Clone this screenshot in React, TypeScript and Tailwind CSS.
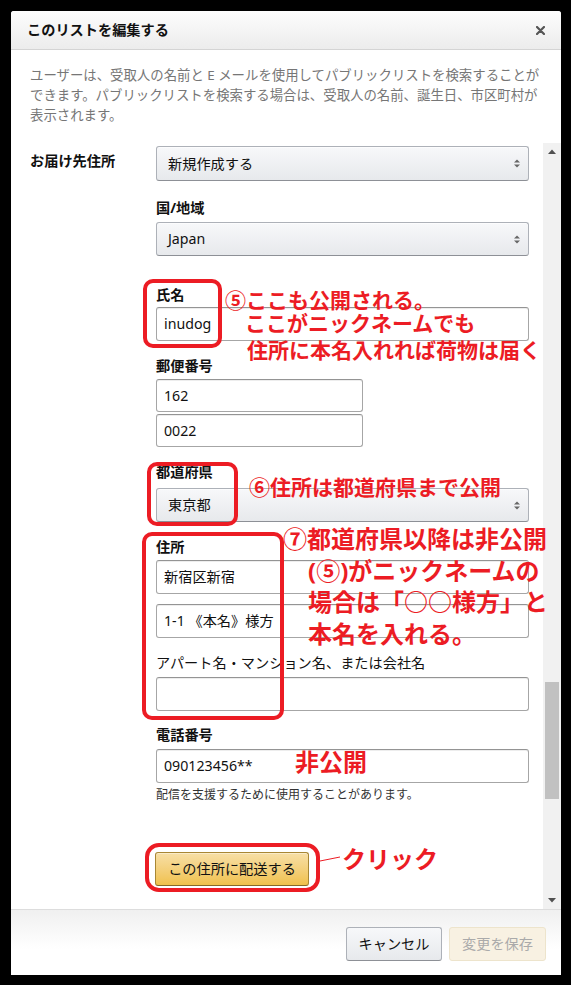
import React from "react";

const Arrows = () => (
  <svg width="6" height="9" viewBox="0 0 6 9" className="shrink-0">
    <path d="M0 3.5 L3 0.5 L6 3.5 Z" fill="#666" />
    <path d="M0 5.5 L3 8.5 L6 5.5 Z" fill="#666" />
  </svg>
);

const Select = ({ value, className = "" }: { value: string; className?: string }) => (
  <div
    className={`flex items-center justify-between rounded-[3px] border border-[#adb1b8] border-b-[#8d9096] bg-gradient-to-b from-[#f7f8fa] to-[#e7e9ec] pl-[11px] pr-[8px] text-[14.2px] text-[#111] shadow-[0_1px_0_rgba(255,255,255,0.6)_inset] ${className}`}
  >
    <span>{value}</span>
    <Arrows />
  </div>
);

const Input = ({ value = "", className = "" }: { value?: string; className?: string }) => (
  <div
    className={`flex items-center rounded-[3px] border border-[#a6a6a6] border-t-[#949494] bg-white pl-[7px] text-[14.2px] text-[#111] shadow-[0_1px_0_rgba(255,255,255,0.5),0_1px_0_rgba(0,0,0,0.07)_inset] ${className}`}
  >
    {value}
  </div>
);

const Label = ({ children, className = "" }: { children: React.ReactNode; className?: string }) => (
  <div className={`h-[20px] text-[14.2px] font-bold leading-[20px] text-[#111] ${className}`}>{children}</div>
);

const Red = ({ children, left, top, size }: { children: React.ReactNode; left: number; top: number; size: "a" | "b" }) => (
  <div
    className={`absolute whitespace-nowrap font-bold text-[#ec1c24] ${size === "a" ? "text-[21px] leading-[21px]" : "text-[24px] leading-[24px]"}`}
    style={{ left, top }}
  >
    {children}
  </div>
);

const Box = ({ l, t, w, h, r = 10 }: { l: number; t: number; w: number; h: number; r?: number }) => (
  <div
    className="absolute border-[4px] border-[#ec1c24]"
    style={{ left: l, top: t, width: w, height: h, borderRadius: r }}
  />
);

export default function App() {
  return (
    <div className="relative h-[985px] w-[571px] overflow-hidden bg-black pt-[11px] pl-[11px] font-['Noto_Sans','Noto_Sans_CJK_JP',sans-serif]">
      <div className="flex h-[964px] w-[550px] flex-col overflow-hidden rounded-t-[3px] bg-white">
        {/* header */}
        <div className="flex h-[39px] shrink-0 items-center justify-between border-b border-[#d4d4d4] bg-gradient-to-b from-[#fdfdfd] to-[#ececec] pl-[16px] pr-[16px]">
          <span className="text-[14.2px] font-bold text-[#111]">このリストを編集する</span>
          <svg width="9" height="9" viewBox="0 0 9 9">
            <path d="M1 1 L8 8 M8 1 L1 8" stroke="#555" strokeWidth="2.2" strokeLinecap="round" />
          </svg>
        </div>
        {/* description */}
        <div className="shrink-0 whitespace-nowrap pb-[18px] pl-[19px] pt-[15px] text-[13.4px] leading-[20px] text-[#767676]">
          <div>ユーザーは、受取人の名前と E メールを使用してパブリックリストを検索することが</div>
          <div>できます。パブリックリストを検索する場合は、受取人の名前、誕生日、市区町村が</div>
          <div>表示されます。</div>
        </div>
        {/* scroll area */}
        <div className="flex h-[766px] shrink-0">
          <div className="flex flex-1 pl-[19px] pt-[3px]">
            <div className="w-[126px] shrink-0 pt-[5px]">
              <Label>お届け先住所</Label>
            </div>
            <div className="flex w-[373px] flex-col">
              <Select value="新規作成する" className="h-[35px]" />
              <Label className="mt-[17px] font-bold">国/地域</Label>
              <Select value="Japan" className="mt-[4px] h-[34px]" />

              <Label className="mt-[29px]">氏名</Label>
              <Input value="inudog" className="mt-[2px] h-[34px]" />

              <Label className="mt-[15px]">郵便番号</Label>
              <Input value="162" className="mt-[3px] h-[33px] w-[207px]" />
              <Input value="0022" className="mt-[2px] h-[33px] w-[207px]" />

              <Label className="mt-[15px]">都道府県</Label>
              <Select value="東京都" className="mt-[6px] h-[34px]" />

              <Label className="mt-[15px]">住所</Label>
              <Input value="新宿区新宿" className="mt-[3px] h-[34px]" />
              <Input value="1-1 《本名》様方" className="mt-[10px] h-[34px]" />

              <Label className="mt-[15px] font-normal">アパート名・マンション名、または会社名</Label>
              <Input className="mt-[4px] h-[34px]" />

              <Label className="mt-[14px]">電話番号</Label>
              <Input value="090123456**" className="mt-[4px] h-[34px]" />
              <div className="mt-[4px] text-[12px] leading-[16px] text-[#333]">配信を支援するために使用することがあります。</div>

              <div className="-ml-px mt-[49px] flex h-[34px] w-[154px] items-center justify-center rounded-[3px] border border-[#a88734] border-b-[#846a29] bg-gradient-to-b from-[#f7dfa5] to-[#f0c14b] text-[14.2px] text-[#111] shadow-[0_1px_0_rgba(255,255,255,0.4)_inset]">
                この住所に配送する
              </div>
            </div>
          </div>
          {/* scrollbar */}
          <div className="flex w-[18px] shrink-0 flex-col items-center bg-[#f1f1f1]">
            <div className="flex h-[17px] items-center justify-center">
              <svg width="8" height="5" viewBox="0 0 8 5">
                <path d="M0 5 L4 0.5 L8 5 Z" fill="#505050" />
              </svg>
            </div>
            <div className="flex-1">
              <div className="mt-[522px] h-[117px] w-[14px] bg-[#c1c1c1]" />
            </div>
            <div className="flex h-[17px] items-center justify-center">
              <svg width="8" height="5" viewBox="0 0 8 5">
                <path d="M0 0 L4 4.5 L8 0 Z" fill="#505050" />
              </svg>
            </div>
          </div>
        </div>
        {/* footer */}
        <div className="flex flex-1 items-start justify-end gap-[7px] border-t border-[#dddddd] bg-gradient-to-b from-[#f0f0f0] to-white to-60% pr-[15px] pt-[17px]">
          <div className="flex h-[34px] w-[96px] items-center justify-center rounded-[3px] border border-[#adb1b8] border-b-[#8d9096] bg-gradient-to-b from-[#f7f8fa] to-[#e7e9ec] text-[14.2px] text-[#111]">
            キャンセル
          </div>
          <div className="flex h-[34px] w-[97px] items-center justify-center rounded-[3px] border border-[#ede4cc] bg-[#f8f1e2] text-[14.2px] text-[#aaaaaa]">
            変更を保存
          </div>
        </div>
      </div>

      {/* annotations */}
      <Box l={143} t={279} w={79} h={69} />
      <Box l={147} t={462} w={91} h={64} />
      <Box l={142} t={532} w={142} h={188} />
      <Box l={145} t={843} w={175} h={49} r={14} />
      <svg className="absolute left-0 top-0" width="571" height="985">
        <line x1="320" y1="861" x2="340" y2="857" stroke="#ec1c24" strokeWidth="1" />
      </svg>

      <Red size="a" left={225} top={290}>⑤ここも公開される。</Red>
      <Red size="a" left={245} top={313}>ここがニックネームでも</Red>
      <Red size="a" left={247} top={340}>住所に本名入れれば荷物は届く</Red>
      <Red size="a" left={249} top={477}>⑥住所は都道府県まで公開</Red>
      <Red size="b" left={283} top={527}>⑦都道府県以降は非公開</Red>
      <Red size="b" left={308} top={559}>(⑤)がニックネームの</Red>
      <Red size="b" left={308} top={590}>場合は「○○様方」と</Red>
      <Red size="b" left={308} top={622}>本名を入れる。</Red>
      <Red size="b" left={295} top={750}>非公開</Red>
      <Red size="b" left={342} top={847}>クリック</Red>
    </div>
  );
}
